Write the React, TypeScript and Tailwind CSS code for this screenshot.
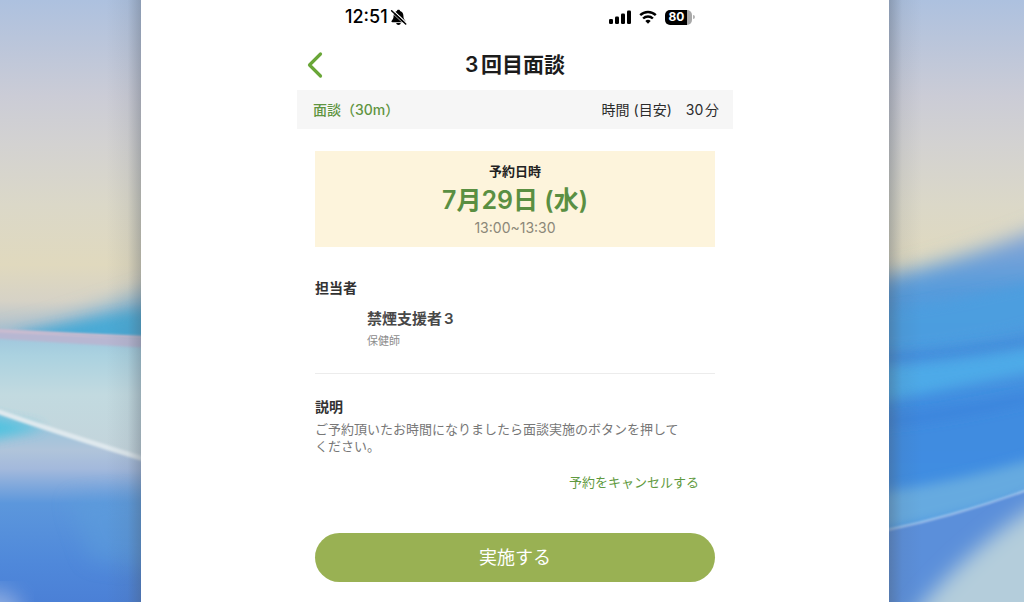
import React from 'react';

const appointment = {
  title: '3回目面談',
  type: '面談（30m）',
  duration: '30分',
  date: '7月29日 (水)',
  time: '13:00~13:30',
  staffName: '禁煙支援者3',
  staffRole: '保健師',
  description: 'ご予約頂いたお時間になりましたら面談実施のボタンを押してください。'
};

const Wallpaper: React.FC = () => (
  <svg
    className="absolute inset-0 h-full w-full"
    viewBox="0 0 1024 602"
    preserveAspectRatio="xMidYMid slice"
    aria-hidden="true"
  >
    <defs>
      <linearGradient id="sky" x1="0" y1="0" x2="0" y2="1">
        <stop offset="0" stopColor="#adc1df" />
        <stop offset="0.08" stopColor="#bcc6da" />
        <stop offset="0.16" stopColor="#cbccd6" />
        <stop offset="0.24" stopColor="#d3d2d1" />
        <stop offset="0.34" stopColor="#dbd8c8" />
        <stop offset="0.44" stopColor="#e0d9be" />
        <stop offset="0.5" stopColor="#d6d2c6" />
        <stop offset="0.56" stopColor="#a3bcd0" />
      </linearGradient>
      <linearGradient id="ice" x1="0" y1="330" x2="0" y2="460" gradientUnits="userSpaceOnUse">
        <stop offset="0" stopColor="#9cc4dc" />
        <stop offset="0.2" stopColor="#abd2e0" />
        <stop offset="0.5" stopColor="#c2dae0" />
        <stop offset="1" stopColor="#c3d3da" />
      </linearGradient>
      <linearGradient id="deep" x1="0" y1="412" x2="0" y2="602" gradientUnits="userSpaceOnUse">
        <stop offset="0" stopColor="#8cc4dc" />
        <stop offset="0.2" stopColor="#b0c4da" />
        <stop offset="0.3" stopColor="#a3b9dc" />
        <stop offset="0.48" stopColor="#5c97dc" />
        <stop offset="0.8" stopColor="#4f88da" />
        <stop offset="1" stopColor="#4b80d6" />
      </linearGradient>
      <linearGradient id="wave" x1="0" y1="230" x2="0" y2="530" gradientUnits="userSpaceOnUse">
        <stop offset="0" stopColor="#8aa6d6" />
        <stop offset="0.2" stopColor="#559bdb" />
        <stop offset="0.4" stopColor="#4b98e0" />
        <stop offset="0.6" stopColor="#3f8be0" />
        <stop offset="1" stopColor="#3f8ee2" />
      </linearGradient>
      <linearGradient id="edge-left" x1="106" y1="0" x2="142" y2="0" gradientUnits="userSpaceOnUse">
        <stop offset="0" stopColor="#4b5563" stopOpacity="0" />
        <stop offset="0.6" stopColor="#4b5563" stopOpacity="0.08" />
        <stop offset="1" stopColor="#4b5563" stopOpacity="0.36" />
      </linearGradient>
      <linearGradient id="edge-right" x1="922" y1="0" x2="889" y2="0" gradientUnits="userSpaceOnUse">
        <stop offset="0" stopColor="#4b5563" stopOpacity="0" />
        <stop offset="0.6" stopColor="#4b5563" stopOpacity="0.08" />
        <stop offset="1" stopColor="#4b5563" stopOpacity="0.36" />
      </linearGradient>
      <filter id="soft" x="-20%" y="-20%" width="140%" height="140%">
        <feGaussianBlur stdDeviation="10" />
      </filter>
      <filter id="mid" x="-20%" y="-50%" width="140%" height="200%">
        <feGaussianBlur stdDeviation="6" />
      </filter>
      <filter id="fine" x="-20%" y="-50%" width="140%" height="200%">
        <feGaussianBlur stdDeviation="1" />
      </filter>
    </defs>
    <rect width="1024" height="602" fill="url(#sky)" />

    {/* left side */}
    <path d="M-20 344 L60 322 L170 284 V350 H-20Z" fill="#7fb4d2" filter="url(#soft)" />
    <path d="M20 334 L180 302 V350 L20 340Z" fill="#3fa8d6" opacity="0.85" filter="url(#mid)" />
    <path d="M-20 329 L200 345 V490 L-20 406Z" fill="url(#ice)" />
    <path d="M-20 333 Q70 339 200 346" fill="none" stroke="#b7b7d2" strokeWidth="9" filter="url(#fine)" />
    <path d="M-20 330 L200 340" stroke="#cdbccf" strokeWidth="3" filter="url(#fine)" />
    <path d="M-20 405 Q60 434 200 476 V620 H-20Z" fill="url(#deep)" />
    <path d="M-20 414 L45 428 L-20 442Z" fill="#4cc2e0" opacity="0.9" filter="url(#mid)" />
    <path d="M70 500 L170 490 V570 L90 560Z" fill="#5d9fdb" opacity="0.5" filter="url(#soft)" />
    <ellipse cx="-8" cy="612" rx="30" ry="22" fill="#a9bfe6" opacity="0.7" filter="url(#soft)" />
    <path d="M-20 405 Q60 434 200 476" fill="none" stroke="#dfe9ee" strokeWidth="5" filter="url(#fine)" />

    {/* right side */}
    <path d="M840 286 Q950 266 1060 220 V620 H840Z" fill="url(#wave)" filter="url(#soft)" />
    <path d="M860 312 Q960 304 1060 274 V318 Q960 350 860 350Z" fill="#4c9fe0" opacity="0.8" filter="url(#mid)" />
    <path d="M860 360 Q950 358 1060 336" fill="none" stroke="#3c86d8" strokeWidth="6" filter="url(#mid)" />
    <path d="M860 368 Q950 364 1060 344 V366 Q960 386 860 406Z" fill="#4fb0ea" opacity="0.8" filter="url(#mid)" />
    <path d="M860 424 Q950 418 1060 390" fill="none" stroke="#3a80da" strokeWidth="6" filter="url(#mid)" />
    <path d="M860 494 Q960 484 1060 450 V482 Q960 520 860 534Z" fill="#66aae0" filter="url(#mid)" />
    <path d="M860 535 Q950 520 1060 478 V620 H860Z" fill="#5b8fda" />
    <path d="M906 626 Q960 550 1060 490 V626Z" fill="#b4cddb" filter="url(#soft)" />
    <path d="M860 535 Q950 520 1060 478" fill="none" stroke="#a5c6ec" strokeWidth="2" filter="url(#fine)" />

    <rect x="106" width="36" height="602" fill="url(#edge-left)" />
    <rect x="889" width="33" height="602" fill="url(#edge-right)" />
  </svg>
);

const StatusBar: React.FC = () => (
  <div className="flex h-[34px] items-center justify-between pl-12 pr-[38px] text-black">
    <div className="flex items-center gap-0.5">
      <span className="text-lg font-medium leading-6">12:51</span>
      <svg width="17" height="17" viewBox="0 0 17 17" aria-hidden="true">
        <path
          d="M8.500 .8c-.9 0-1.500.5-1.600 1.200C4.700 2.700 3.600 4.500 3.600 6.800c0 2.800-.9 3.800-1.900 4.900-.6.7-.2 1.500.7 1.500h12.200c.9 0 1.300-.8.7-1.500-1-1.100-1.900-2.100-1.900-4.900 0-2.300-1.100-4.100-3.300-4.800C10 1.300 9.400.8 8.500.8Z"
          fill="#000"
        />
        <path d="M6.200 14h4.600c-.2 1.200-1.100 2-2.300 2s-2.100-.8-2.300-2Z" fill="#000" />
        <path d="M2.600 1 16.600 14" stroke="#fff" strokeWidth="1.100" />
        <path d="M.8 2.600 14.800 15.800" stroke="#fff" strokeWidth="0.800" />
        <path d="M1.600 1.800 15.700 15" stroke="#000" strokeWidth="1.500" strokeLinecap="round" />
      </svg>
    </div>
    <div className="flex items-center gap-2">
      <svg width="22" height="14" viewBox="0 0 22 14" aria-hidden="true">
        <rect x="0" y="9" width="4" height="5" rx="1.200" />
        <rect x="6" y="6.500" width="4" height="7.500" rx="1.200" />
        <rect x="12" y="3.500" width="4" height="10.500" rx="1.200" />
        <rect x="18" y="0.500" width="4" height="13.500" rx="1.200" />
      </svg>
      <svg width="18" height="14" viewBox="0 0 18 14" aria-hidden="true">
        <path d="M1.200 5.200a11.200 11.200 0 0 1 15.600 0" fill="none" stroke="#000" strokeWidth="2.400" />
        <path d="M4.100 8.500a7 7 0 0 1 9.800 0" fill="none" stroke="#000" strokeWidth="2.400" />
        <path d="M9 13.800 6.300 11a3.900 3.900 0 0 1 5.400 0Z" fill="#000" />
      </svg>
      <div className="flex items-center gap-px">
        <span className="flex h-[15px] w-[27px] items-center justify-center rounded-[5px] bg-linear-to-r from-black from-80% to-[#a8a8a8] to-80% pr-1 text-xs font-bold leading-none text-white">
          80
        </span>
        <span className="h-1 w-0.5 rounded-r-full bg-[#b4b4b4]" />
      </div>
    </div>
  </div>
);

const App: React.FC = () => {
  return (
    <div className="relative grid min-h-screen grid-cols-[141fr_748fr_135fr] overflow-hidden font-[Inter,'Noto_Sans_CJK_JP',sans-serif]">
      <Wallpaper />
      <div className="relative col-start-2 bg-white" lang="ja">
        <div className="mx-auto max-w-[436px]">
          <StatusBar />

          <header className="grid h-14 grid-cols-[1fr_auto_1fr] items-center px-1.5 pt-1.5">
            <button type="button" aria-label="戻る" className="flex w-6 justify-center">
              <svg width="20" height="28" viewBox="0 0 20 28" aria-hidden="true">
                <path
                  d="M15.500 3 4.500 14l11 11"
                  fill="none"
                  stroke="#69a637"
                  strokeWidth="3.200"
                  strokeLinecap="round"
                  strokeLinejoin="round"
                />
              </svg>
            </button>
            <h1 className="text-[21px] font-semibold leading-8 text-[#1c1c1c] [text-autospace:normal]">
              {appointment.title}
            </h1>
          </header>

          <div className="flex h-[39px] items-center justify-between bg-[#f6f6f6] pl-4 pr-3.5 text-sm">
            <span className="font-medium text-[#5f9440]">{appointment.type}</span>
            <div className="flex gap-3.5 text-[#2b2b2b]">
              <span>時間 (目安)</span>
              <span className="[text-autospace:normal]">{appointment.duration}</span>
            </div>
          </div>

          <main className="px-[18px] pt-[22px]">
            <section className="flex h-24 flex-col items-center justify-center bg-[#fdf4dc]">
              <h2 className="text-[13px] font-bold leading-5 text-[#222]">予約日時</h2>
              <p className="text-[25px] font-semibold leading-[38px] text-[#5a8f42]">{appointment.date}</p>
              <p className="text-sm leading-[18px] text-[#8b8778]">{appointment.time}</p>
            </section>

            <section className="border-b border-[#ececec] pb-[22px] pt-[30px]">
              <h2 className="text-sm font-bold leading-[22px] text-[#333]">担当者</h2>
              <div className="pl-[52px] pt-2">
                <p className="text-[15px] font-semibold leading-6 text-[#484848] [text-autospace:normal]">
                  {appointment.staffName}
                </p>
                <p className="text-[11px] leading-5 text-[#8c8c8c]">{appointment.staffRole}</p>
              </div>
            </section>

            <section className="pt-[22px]">
              <h2 className="text-sm font-bold leading-[22px] text-[#333]">説明</h2>
              <p className="pr-7 pt-[3px] text-[13px] leading-[17px] text-[#777]">{appointment.description}</p>
            </section>

            <div className="flex justify-end pr-4 pt-[17px]">
              <a href="#cancel" className="text-[13px] leading-5 text-[#5f9a40]">
                予約をキャンセルする
              </a>
            </div>

            <button
              type="button"
              className="mb-5 mt-[41px] flex h-[49px] w-full items-center justify-center rounded-full bg-[#99b153] text-lg text-white"
            >
              実施する
            </button>
          </main>
        </div>
      </div>
    </div>
  );
};

export default App;
